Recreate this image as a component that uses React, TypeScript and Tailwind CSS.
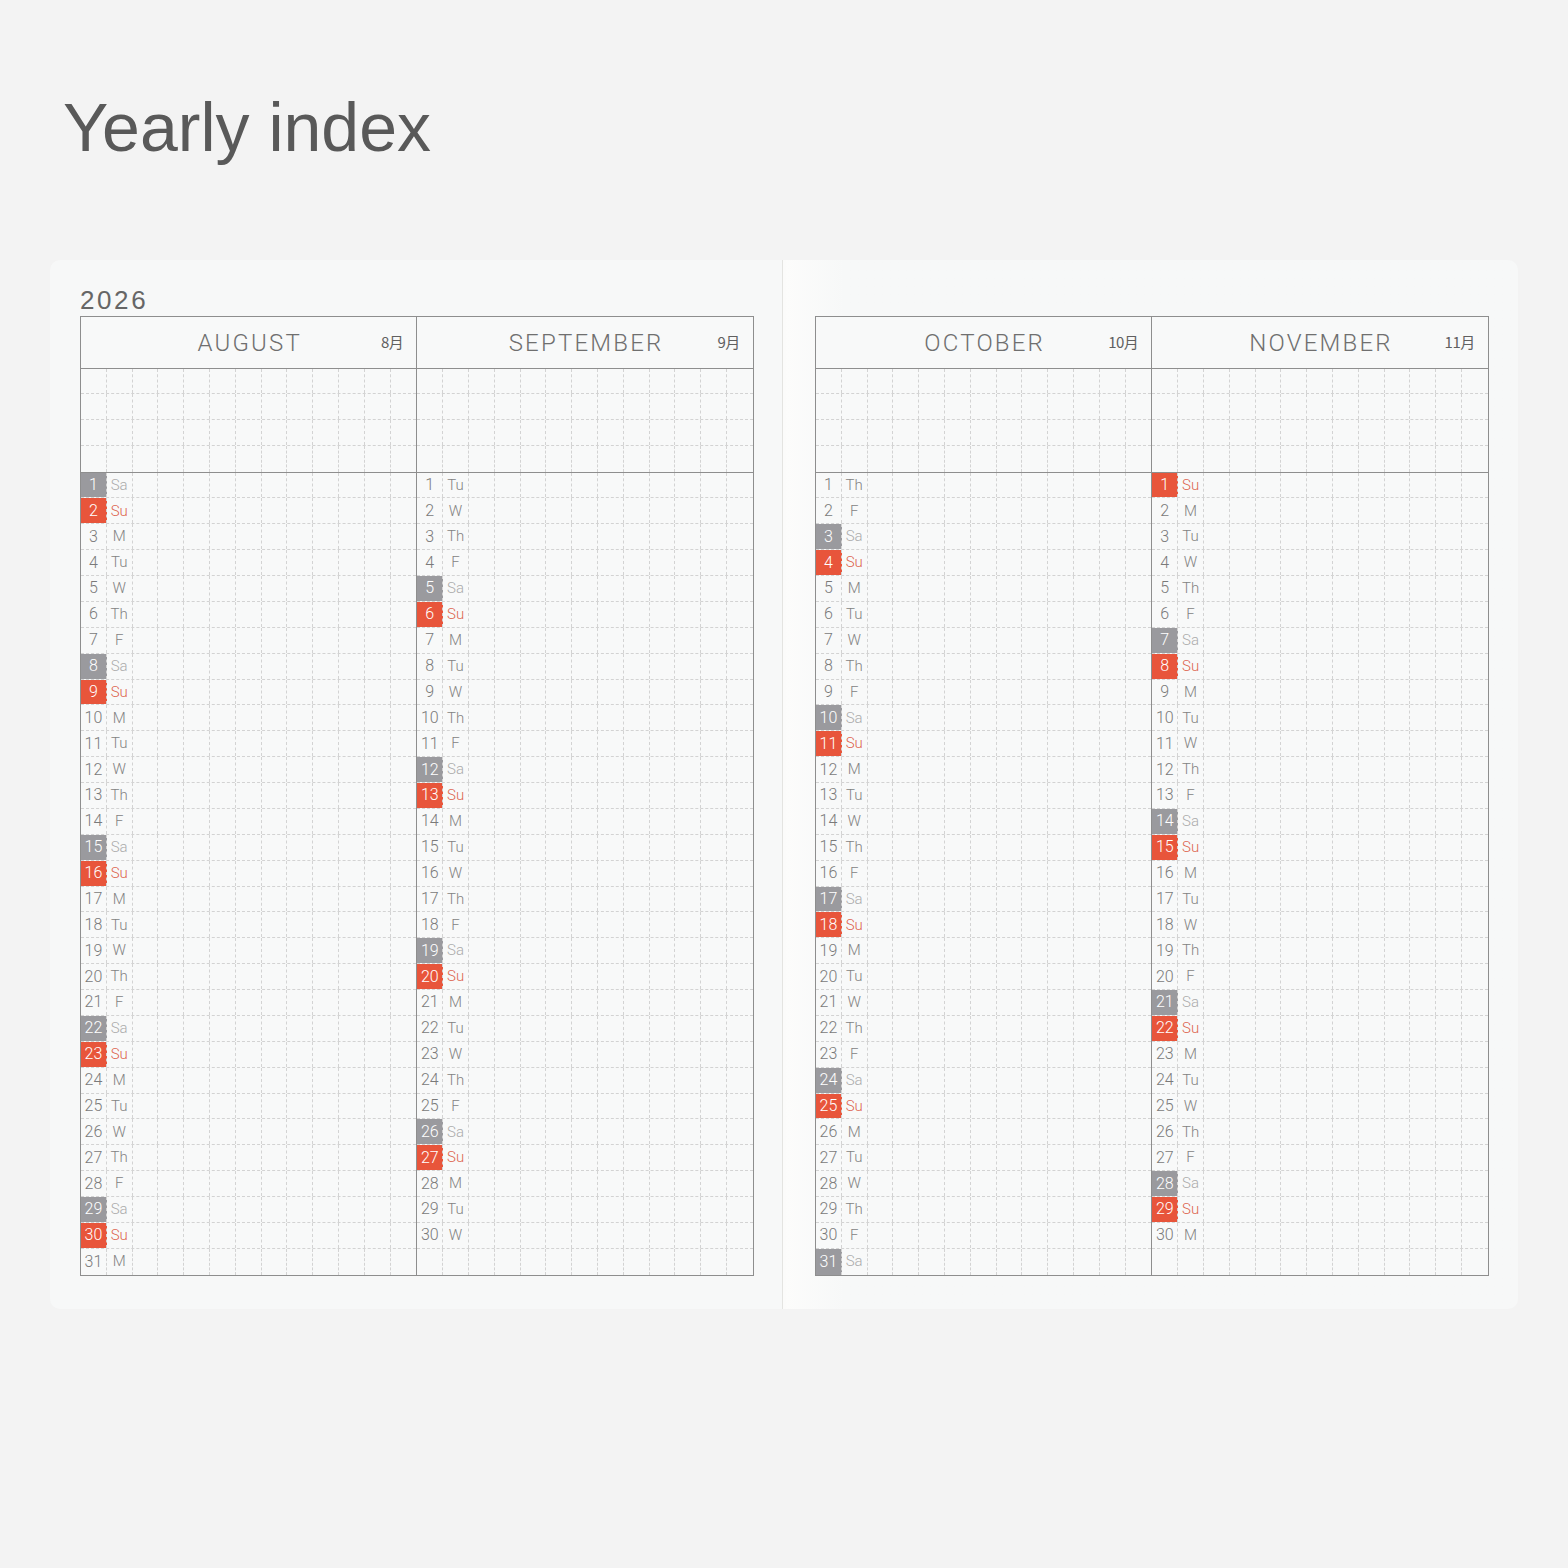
import React from "react";

const WD = ["Su", "M", "Tu", "W", "Th", "F", "Sa"];

type Month = { name: string; kanji: string; days: number; start: number };

const MONTHS: Month[] = [
  { name: "AUGUST", kanji: "8月", days: 31, start: 6 },
  { name: "SEPTEMBER", kanji: "9月", days: 30, start: 2 },
  { name: "OCTOBER", kanji: "10月", days: 31, start: 4 },
  { name: "NOVEMBER", kanji: "11月", days: 30, start: 0 },
];

const EMPTY = Array.from({ length: 11 });

function Cell({ last }: { last?: boolean }) {
  return (
    <div
      className={
        last
          ? "w-[25.8px] shrink-0"
          : "w-[25.8px] shrink-0 border-r border-dashed border-[#d3d3d3]"
      }
    />
  );
}

function BlankRow({ last }: { last?: boolean }) {
  return (
    <div
      className={
        last
          ? "flex h-[25.75px]"
          : "flex h-[25.75px] border-b border-dashed border-[#d3d3d3]"
      }
    >
      <Cell />
      <Cell />
      {EMPTY.map((_, i) => (
        <Cell key={i} last={i === 10} />
      ))}
    </div>
  );
}

function DayRow({ day, wd, last }: { day?: number; wd?: number; last?: boolean }) {
  const isSa = wd === 6;
  const isSu = wd === 0;
  const numCls = isSu
    ? "bg-[#e8553b] text-white"
    : isSa
    ? "bg-[#9a9a9e] text-white"
    : "text-[#7a7a7a]";
  const wdCls = isSu ? "text-[#dd644d]" : isSa ? "text-[#ababab]" : "text-[#838383]";
  return (
    <div
      className={
        last
          ? "flex h-[25.88px]"
          : "flex h-[25.88px] border-b border-dashed border-[#d3d3d3]"
      }
    >
      <div
        className={`w-[25.8px] shrink-0 border-r border-dashed border-[#d3d3d3] flex items-center justify-center text-[16px] font-light ${numCls}`}
      >
        {day}
      </div>
      <div
        className={`w-[25.8px] shrink-0 border-r border-dashed border-[#d3d3d3] flex items-center justify-center text-[15px] font-light ${wdCls}`}
      >
        {wd !== undefined ? WD[wd] : ""}
      </div>
      {EMPTY.map((_, i) => (
        <Cell key={i} last={i === 10} />
      ))}
    </div>
  );
}

function MonthColumn({ m, first }: { m: Month; first?: boolean }) {
  const rows = Array.from({ length: 31 }, (_, i) =>
    i < m.days ? { day: i + 1, wd: (m.start + i) % 7 } : {}
  );
  return (
    <div
      className={
        first
          ? "flex flex-col border-r border-[#8e8e8e]"
          : "flex flex-col"
      }
    >
      <div className="h-[51.5px] grid grid-cols-[1fr_auto_1fr] items-center border-b border-[#8e8e8e]">
        <div />
        <div className="text-[24px] font-light tracking-[2.2px] text-[#6f6f6f] leading-none pl-[2px] pt-[2px]">
          {m.name}
        </div>
        <div
          className="justify-self-end pr-[13px] text-[15px] font-normal text-[#606060] leading-none tracking-[-0.5px] pb-[1px]"
          style={{ fontFamily: '"Noto Sans CJK JP", sans-serif' }}
        >
          {m.kanji}
        </div>
      </div>
      <div className="border-b border-[#8e8e8e]">
        {[0, 1, 2, 3].map((i) => (
          <BlankRow key={i} last={i === 3} />
        ))}
      </div>
      <div>
        {rows.map((r, i) => (
          <DayRow key={i} day={r.day} wd={r.wd} last={i === 30} />
        ))}
      </div>
    </div>
  );
}

function Grid({ a, b }: { a: Month; b: Month }) {
  return (
    <div className="flex self-start border border-[#8e8e8e] border-b-[1.5px] bg-[#f8f9f9]">
      <MonthColumn m={a} first />
      <MonthColumn m={b} />
    </div>
  );
}

export default function App() {
  return (
    <div
      className="w-[1568px] h-[1568px] bg-[#f3f3f3] flex flex-col"
      style={{ fontFamily: 'Roboto, "Liberation Sans", sans-serif' }}
    >
      <div
        className="pt-[93px] pl-[63px] text-[68px] leading-none text-[#595959]"
        style={{ fontFamily: '"Liberation Sans", Arial, sans-serif' }}
      >
        Yearly index
      </div>
      <div className="mt-[99px] ml-[50px] flex w-[1468px] h-[1049px]">
        <div className="w-[733px] h-full bg-[#f7f8f8] rounded-l-[10px] border-r border-[#e4e4e1] flex flex-col pl-[30px] pt-[27px]">
          <div
            className="text-[26px] leading-none tracking-[2.6px] text-[#666] h-[29px]"
            style={{ fontFamily: '"Liberation Sans", Arial, sans-serif' }}
          >
            2026
          </div>
          <Grid a={MONTHS[0]} b={MONTHS[1]} />
        </div>
        <div className="w-[3px] h-full bg-[#fbfbfa]" />
        <div className="flex-1 h-full rounded-r-[10px] flex flex-col pl-[29px] pt-[56px] bg-gradient-to-r from-[#fcfcfb] via-[#f7f8f8] via-[8%] to-[#f7f8f8]">
          <Grid a={MONTHS[2]} b={MONTHS[3]} />
        </div>
      </div>
    </div>
  );
}
